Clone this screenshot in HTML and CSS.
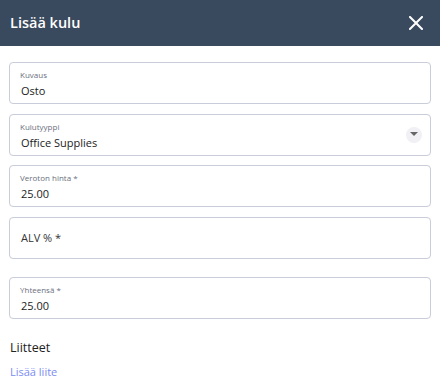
FILE: index.html
```html
<!DOCTYPE html>
<html lang="fi">
<head>
    <meta charset="UTF-8">
    <meta name="viewport" content="width=device-width, initial-scale=1.0">
    <title>Lisää kulu</title>
    <link rel="stylesheet" href="styles.css">
</head>
<body>
    <!-- Dialog header -->
    <div class="dialog-header">
        <div class="dialog-title">Lisää kulu</div>
        <button class="close-button" aria-label="Sulje">
            <svg width="14" height="14" viewBox="0 0 14 14">
                <path d="M1 1 L13 13 M13 1 L1 13" stroke="#ffffff" stroke-width="2" stroke-linecap="square"/>
            </svg>
        </button>
    </div>

    <div class="dialog-body">
        <div class="field">
            <div class="field-label">Kuvaus</div>
            <div class="field-value">Osto</div>
        </div>

        <div class="field select">
            <div class="field-label">Kulutyyppi</div>
            <div class="field-value">Office Supplies</div>
            <span class="select-arrow">
                <svg width="8" height="5" viewBox="0 0 8 5"><path d="M0 0 H8 L4 4 Z" fill="#666"/></svg>
            </span>
        </div>

        <div class="field">
            <div class="field-label">Veroton hinta *</div>
            <div class="field-value">25.00</div>
        </div>

        <div class="field empty">
            <div class="field-placeholder">ALV % *</div>
        </div>

        <div class="field total">
            <div class="field-label">Yhteensä *</div>
            <div class="field-value">25.00</div>
        </div>

        <div class="attachments">
            <div class="attachments-title">Liitteet</div>
            <a class="add-link" href="#">Lisää liite</a>
        </div>
    </div>
</body>
</html>
```

FILE: styles.css
```css
body {
    margin: 0;
    background-color: #ffffff;
    font-family: 'Open Sans', 'Noto Sans', sans-serif;
    color: #222;
}

.dialog-header {
    height: 46px;
    background-color: #3a4a5e;
    display: flex;
    align-items: center;
    justify-content: space-between;
    padding: 0 17px 0 10px;
}
.dialog-title {
    color: #ffffff;
    font-size: 14.5px;
    font-weight: 600;
    margin-top: -2px;
}
.close-button {
    background: transparent;
    border: none;
    padding: 0;
    width: 14px;
    height: 14px;
    display: flex;
    cursor: pointer;
}

.dialog-body {
    padding: 16px 9px 0 9px;
    display: flex;
    flex-direction: column;
    gap: 9.5px;
}

.field {
    position: relative;
    height: 42px;
    box-sizing: border-box;
    border: 1px solid #c9ccd9;
    border-radius: 4px;
    padding: 6px 12px 0 11px;
}
.field-label {
    font-size: 8px;
    color: #6b6f80;
    line-height: 11px;
    margin-left: -1px;
}
.field-value {
    font-size: 11px;
    line-height: 16px;
    margin-top: 3px;
    color: #222;
}
.field.empty {
    display: flex;
    align-items: center;
    padding-top: 0;
}
.field-placeholder {
    font-size: 11px;
    color: #333;
    margin-top: -1px;
}
.field.total {
    margin-top: 9px;
}

/* Dropdown arrow */
.select-arrow {
    position: absolute;
    right: 8px;
    top: 12px;
    width: 16px;
    height: 16px;
    border-radius: 50%;
    background-color: #f0f0f5;
    display: flex;
    align-items: center;
    justify-content: center;
}

.attachments {
    padding: 10px 1px 0 1px;
}
.attachments-title {
    font-size: 12.5px;
    font-weight: 500;
    color: #222;
    line-height: 18px;
}
.add-link {
    display: block;
    margin-top: 7px;
    font-size: 11px;
    color: #7b8cf3;
    text-decoration: none;
}
```
